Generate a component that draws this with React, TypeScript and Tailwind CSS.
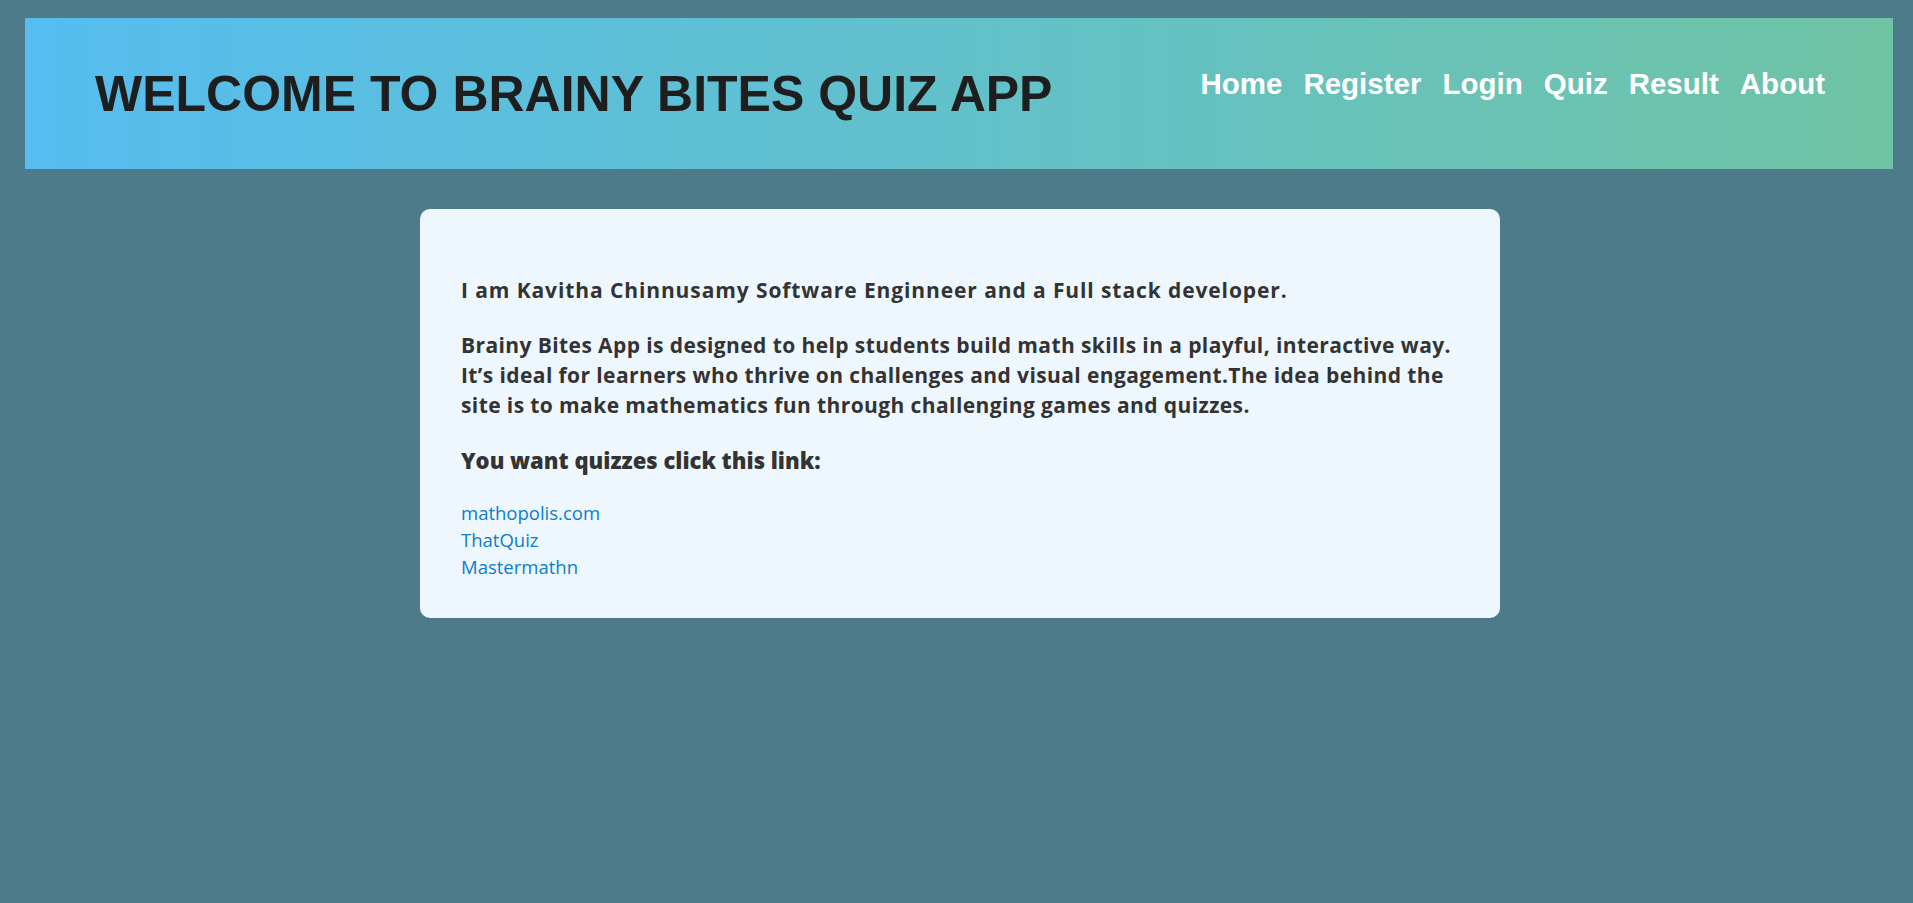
const links = ["mathopolis.com", "ThatQuiz", "Mastermathn"];
const nav = ["Home", "Register", "Login", "Quiz", "Result", "About"];

export default function App() {
  return (
    <div className="min-h-[903px] bg-[#4e7b89] pt-[18px] pb-10">
      {/* Header */}
      <header className="ml-[25px] mr-[20px] h-[151px] flex items-center justify-between bg-[linear-gradient(to_right,#55bdf0,#6fc4a4)] pl-[70px] pr-[68px] font-['Liberation_Sans',Arial,sans-serif]">
        <h1 className="text-[50px] font-bold text-[#1e1e1e] leading-none">
          WELCOME TO BRAINY BITES QUIZ APP
        </h1>
        <nav className="flex gap-[21px] -mt-[20px]">
          {nav.map((item) => (
            <a key={item} href="#" className="text-[29.5px] font-bold text-white leading-none">
              {item}
            </a>
          ))}
        </nav>
      </header>

      {/* About card */}
      <main className="mt-[40px] ml-[420px] w-[1080px] rounded-[10px] bg-[#eff7fe] pl-[41px] pr-[28px] pt-[66px] pb-[38px] text-[#333] font-['Open_Sans',sans-serif]">
        <p className="text-[21px] tracking-[0.9px] font-bold leading-[30px] mb-[25px]">
          I am Kavitha Chinnusamy Software Enginneer and a Full stack developer.
        </p>
        <p className="text-[21px] tracking-[0.4px] font-bold leading-[30px] mb-[25px]">
          Brainy Bites App is designed to help students build math skills in a playful, interactive way.
          It’s ideal for learners who thrive on challenges and visual engagement.The idea behind the site
          is to make mathematics fun through challenging games and quizzes.
        </p>
        <h3 className="text-[22px] font-extrabold leading-[30px] mb-[24px]">
          You want quizzes click this link:
        </h3>
        <ul>
          {links.map((l) => (
            <li key={l} className="text-[18.5px] leading-[27px]">
              <a href="#" className="text-[#0b7dcc]">
                {l}
              </a>
            </li>
          ))}
        </ul>
      </main>
    </div>
  );
}
